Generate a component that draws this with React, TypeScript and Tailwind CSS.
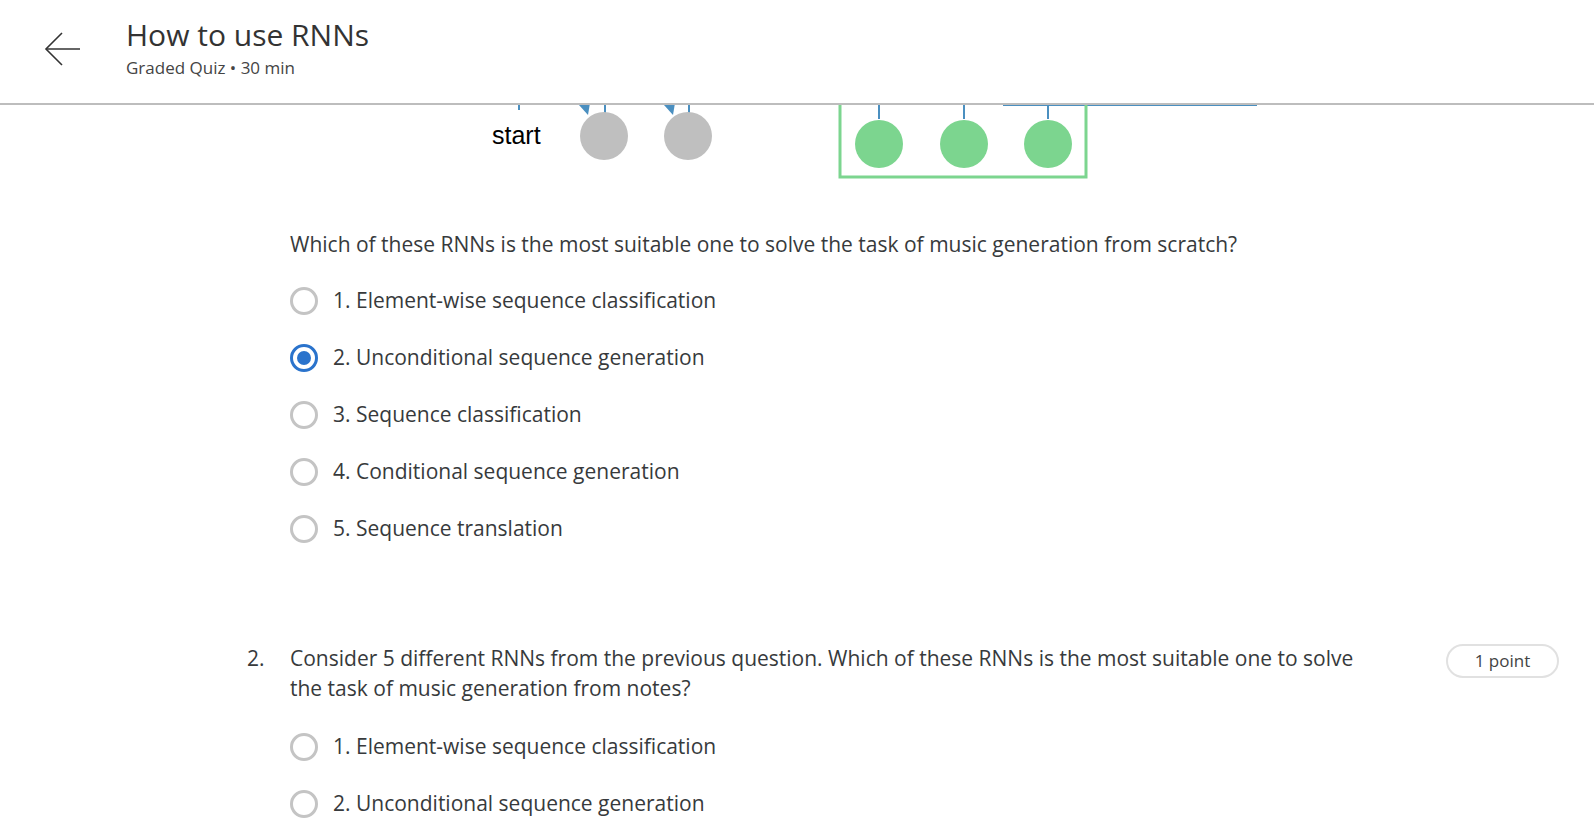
import React from 'react';

const FONT = { fontFamily: '"Open Sans", "Noto Sans", sans-serif' };

const Q1_OPTIONS = [
  '1. Element-wise sequence classification',
  '2. Unconditional sequence generation',
  '3. Sequence classification',
  '4. Conditional sequence generation',
  '5. Sequence translation',
];

const Q2_OPTIONS = [
  '1. Element-wise sequence classification',
  '2. Unconditional sequence generation',
];

function Radio({ checked }: { checked?: boolean }) {
  if (checked) {
    return (
      <span className="flex h-[28px] w-[28px] shrink-0 items-center justify-center rounded-full border-[3px] border-[#2a73cc]">
        <span className="h-[14px] w-[14px] rounded-full bg-[#2a73cc]" />
      </span>
    );
  }
  return <span className="h-[28px] w-[28px] shrink-0 rounded-full border-[3px] border-[#c4c4c4]" />;
}

function Option({ label, checked }: { label: string; checked?: boolean }) {
  return (
    <label className="flex h-[28px] items-center gap-[15px]">
      <Radio checked={checked} />
      <span className="text-[21px] text-[#373a3c]">{label}</span>
    </label>
  );
}

// top of the diagram, half hidden under the header
function Diagram() {
  const blue = '#4a8fc0';
  const green = '#7cd58f';
  return (
    <svg width="1594" height="78" viewBox="0 0 1594 78" className="block">
      <line x1="519" y1="0" x2="519" y2="5" stroke={blue} strokeWidth="2" />
      <text x="492" y="39" fontSize="25" fill="#000" fontFamily='"Liberation Sans", Arial, sans-serif'>start</text>

      <line x1="578" y1="-8" x2="585" y2="2" stroke={blue} strokeWidth="2" />
      <polygon points="579,0 590,-2 588,10" fill={blue} />
      <line x1="605" y1="0" x2="605" y2="8" stroke={blue} strokeWidth="2" />
      <circle cx="604" cy="31" r="24" fill="#bfbfbf" />

      <line x1="663" y1="-8" x2="670" y2="2" stroke={blue} strokeWidth="2" />
      <polygon points="664,0 675,-2 673,10" fill={blue} />
      <line x1="689" y1="0" x2="689" y2="8" stroke={blue} strokeWidth="2" />
      <circle cx="688" cy="31" r="24" fill="#bfbfbf" />

      <line x1="1003" y1="0" x2="1257" y2="0" stroke={blue} strokeWidth="2" />
      <polyline points="840,0 840,72 1086,72 1086,0" fill="none" stroke={green} strokeWidth="3" />
      {[879, 964, 1048].map(cx => (
        <g key={cx}>
          <line x1={cx} y1="0" x2={cx} y2="14" stroke={blue} strokeWidth="2" />
          <circle cx={cx} cy="39" r="24" fill={green} />
        </g>
      ))}
    </svg>
  );
}

export default function App() {
  return (
    <div className="min-h-screen bg-white text-[#373a3c]" style={FONT}>
      <header className="flex h-[105px] items-start border-b-2 border-[#bdbdbd] bg-white">
        <button className="ml-[42px] mt-[30px] flex h-[38px] w-[40px] items-center justify-center text-[#333]">
          <svg width="38" height="36" viewBox="0 0 38 36" fill="none" stroke="currentColor" strokeWidth="1.6">
            <path d="M37 18H3" />
            <path d="M19 2L3 18l16 16" />
          </svg>
        </button>
        <div className="ml-[44px] mt-[16px]">
          <h1 className="text-[30px] leading-[38px] text-[#333]">How to use RNNs</h1>
          <p className="text-[17px] leading-[28px] text-[#444]">Graded Quiz • 30 min</p>
        </div>
      </header>

      <Diagram />

      <main className="pl-[247px] pr-[35px]">
        <div className="pl-[43px]">
          <p className="mt-[46px] text-[21px] leading-[30px]">
            Which of these RNNs is the most suitable one to solve the task of music generation from scratch?
          </p>
          <div className="mt-[28px] flex flex-col gap-[29px]">
            {Q1_OPTIONS.map((o, i) => (
              <Option key={o} label={o} checked={i === 1} />
            ))}
          </div>
        </div>

        <section className="mt-[100px] flex items-start">
          <span className="w-[43px] shrink-0 text-[21px] leading-[30px]">2.</span>
          <div className="flex-1">
            <div className="flex items-start justify-between">
              <p className="w-[1080px] text-[21px] leading-[30px]">
                Consider 5 different RNNs from the previous question. Which of these RNNs is the most suitable one to solve the task of music generation from notes?
              </p>
              <span className="mt-[1px] flex h-[34px] w-[113px] items-center justify-center rounded-full border-2 border-[#e1e1e1] text-[17px] text-[#444]">
                1 point
              </span>
            </div>
            <div className="mt-[30px] flex flex-col gap-[29px]">
              {Q2_OPTIONS.map(o => (
                <Option key={o} label={o} />
              ))}
            </div>
          </div>
        </section>
      </main>
    </div>
  );
}
